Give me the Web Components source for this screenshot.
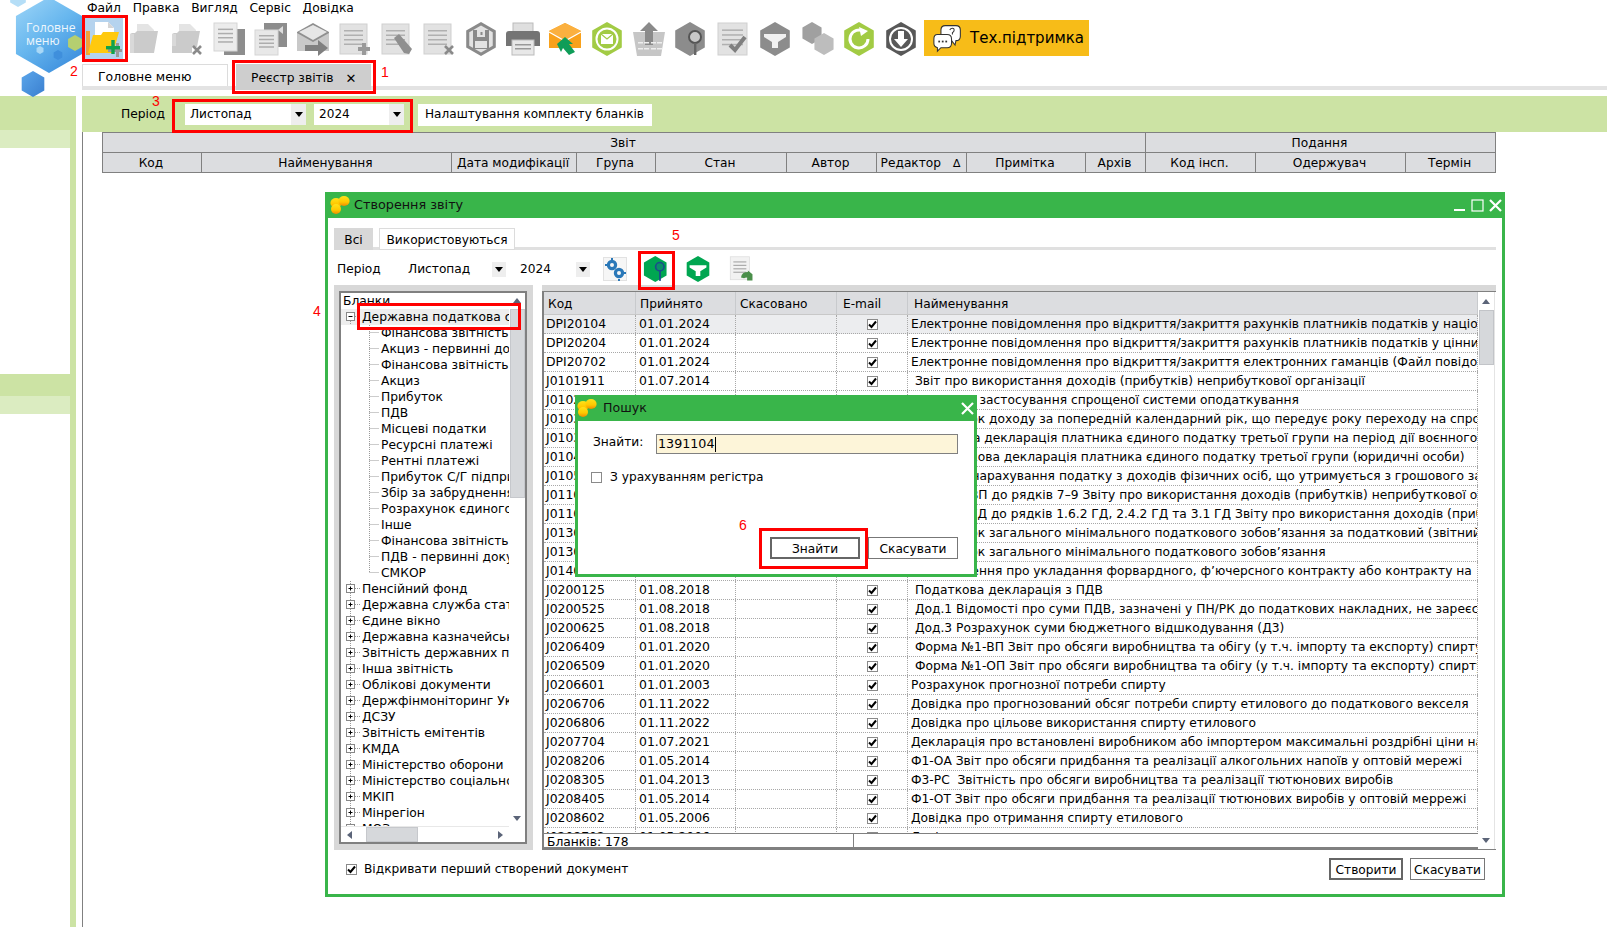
<!DOCTYPE html>
<html lang="uk"><head><meta charset="utf-8"><title>Реєстр звітів</title>
<style>
html,body{margin:0;height:100%;overflow:hidden;background:#fff}
body{font:12.2px/1.2 "DejaVu Sans",sans-serif;color:#000}
</style></head><body>
<app-shell>
  <app-logo slot="logo"></app-logo>
  <side-nav slot="side"></side-nav>
  <top-panel slot="top"></top-panel>
  <work-area slot="main"></work-area>
</app-shell>
<create-window></create-window>
<search-window></search-window>
<red-box style="--x:82px;--y:15px;--w:46px;--h:47px"></red-box>
<red-box style="--x:232px;--y:60px;--w:144px;--h:34px"></red-box>
<red-box style="--x:172px;--y:99px;--w:241px;--h:34px"></red-box>
<red-box style="--x:357px;--y:303px;--w:164px;--h:27px"></red-box>
<red-box style="--x:638px;--y:251px;--w:37px;--h:39px"></red-box>
<red-box style="--x:759px;--y:528px;--w:109px;--h:41px"></red-box>
<red-num style="--x:381px;--y:63px">1</red-num>
<red-num style="--x:70px;--y:62px">2</red-num>
<red-num style="--x:152px;--y:92px">3</red-num>
<red-num style="--x:313px;--y:302px">4</red-num>
<red-num style="--x:672px;--y:226px">5</red-num>
<red-num style="--x:739px;--y:516px">6</red-num>
<script>
const H=(cx,cy,r,f,s='')=>`<polygon points="${cx},${cy-r} ${cx+.87*r},${cy-.5*r} ${cx+.87*r},${cy+.5*r} ${cx},${cy+r} ${cx-.87*r},${cy+.5*r} ${cx-.87*r},${cy-.5*r}" fill="${f}" ${s}/>`;
const R=(x,y,w,h,f)=>`<rect x="${x}" y="${y}" width="${w}" height="${h}" fill="${f}"/>`;
const page=(x,y,w,h,f='#e2e2e2',l='#b0b0b0',s='#cfcfcf')=>`<rect x="${x}" y="${y}" width="${w}" height="${h}" fill="${f}" stroke="${s}" stroke-width="1"/>`+[.2,.35,.5,.65].map(k=>R(x+4,y+h*k,w-8,1.5,l)).join('');
const plus=(x,y,c,d=3)=>R(x-6,y-d/2,12,d,c)+R(x-d/2,y-6,d,12,c);
const cross=(x,y,c)=>`<path d="M${x-4} ${y-4}L${x+4} ${y+4}M${x+4} ${y-4}L${x-4} ${y+4}" stroke="${c}" stroke-width="2.6"/>`;
const folderGray=`<path d="M9 2h11l6 6v12H9z" fill="#e4e4e4"/><path d="M2 12l2-1h3l2-2 h21l-4 22H2z" fill="#cbcbcb"/><path d="M2 12h4v19H2z" fill="#d9d9d9"/>`;
const ICONS={
 newfolder:`<path d="M9 0h13l6 6v14H9z" fill="#fff"/><path d="M22 0l6 6h-6z" fill="#d5d5d5"/><path d="M0 9h4v24H0z" fill="#f0a33a"/><path d="M2 31L7 13h8l2-3h16l-6 21z" fill="#ffc90e"/>${R(22,27,14,3,'#999')}${R(30,21,3,14,'#999')}${R(20,24,14,3.4,'#0fa24d')}${R(25.3,18,3.4,14,'#0fa24d')}`,
 open:folderGray,
 openx:folderGray.replace('M2 12l2-1h3l2-2 h21l-4 22H2z','M2 12l2-1h3l2-2 h21l-3 16H2z')+`<path d="M2 24h20v7H2z" fill="#cbcbcb"/>`+cross(27,28,'#8a8a8a'),
 copy:R(12,7,21,26,'#8d8d8d')+page(2,1,23,28,'#ececec','#adadad','#d5d5d5'),
 copyto:R(10,1,23,24,'#8d8d8d')+page(1,8,23,25,'#e8e8e8','#adadad','#d5d5d5')+`<path d="M24 8l5-4v8z" fill="#ddd"/>`,
 mail:`<path d="M1 10L17 1l16 9v18H1z" fill="#8f8f8f"/><path d="M3 10L17 3l14 7-14 8z" fill="#e6e6e6"/><path d="M1 11l16 9 16-9v18H1z" fill="#c9c9c9"/><path d="M9 23h13v-5l10 8-10 8v-5H9z" fill="#808080"/>`,
 docadd:page(2,2,27,30)+plus(26,27,'#9a9a9a',4),
 docedit:page(2,2,27,30)+`<path d="M14 16l5-4 13 15-3 5-5-1z" fill="#8f8f8f"/>`,
 docdel:page(2,2,27,30)+cross(27,28,'#8a8a8a'),
 disk:H(17,17,17,'#8a8a8a')+H(17,17,13.5,'#e3e3e3')+`<rect x="9" y="8" width="16" height="19" fill="#8a8a8a"/><rect x="13" y="8" width="8" height="7" fill="#e3e3e3"/>${R(16.5,10,2,3,'#8a8a8a')}${R(11,19,12,7,'#e3e3e3')}`,
 print:`<rect x="7" y="1" width="20" height="10" fill="#dfdfdf" stroke="#bbb"/><path d="M0 12q0-3 3-3h28q3 0 3 3v12H0z" fill="#747474"/><rect x="6" y="18" width="22" height="15" fill="#e8e8e8" stroke="#bbb"/>${R(9,22,16,1.5,'#999')+R(9,26,16,1.5,'#999')}`,
 orange:`<path d="M1 9L17 1l16 8v17H1z" fill="#f9a11b"/><path d="M1 9l16 10L33 9l-16-8z" fill="#fbb03f"/><path d="M1 10l16 9 16-9" stroke="#fff" stroke-width="1.4" fill="none"/><path d="M9 22l8-7 8 7-4 0 6 8-6 3-6-7-2 4z" fill="#0f9d58"/>`,
 mailsync:H(17,17,17,'#a2cb44')+`<circle cx="17" cy="17" r="10.5" fill="none" stroke="#fff" stroke-width="2"/>${R(11,12,12,10,'#fff')}<path d="M11 12l6 5 6-5" stroke="#a2cb44" stroke-width="1.2" fill="none"/>`,
 upload:`<path d="M1 10h32l-4 24H5z" fill="#c6c6c6"/><path d="M17 0l9 9h-5v14h-8V9H8z" fill="#8a8a8a"/>${[20,26].map(y=>[7,13,20,26].map(x=>R(x-1,y,5,1.5,'#eee')).join('')).join('')}`,
 hexsearch:H(16,17,17,'#8c8c8c')+`<circle cx="21" cy="15" r="6" fill="#c8c8c8" stroke="#555" stroke-width="2"/>${R(20,21,2.4,12,'#666')}`,
 doccheck:page(2,1,29,32)+`<path d="M14 23l5 5 10-13" stroke="#7f7f7f" stroke-width="4" fill="none"/>`,
 hexfilter:H(17,17,17,'#8c8c8c')+`<path d="M6 12h22v3l-8 5v6h-6v-6l-8-5z" fill="#f1f1f1"/>`,
 hexes:H(12,11,11,'#a0a0a0')+H(24,22,11,'#bdbdbd'),
 refresh:H(17,17,17,'#a2cb44')+`<path d="M26 17a9 9 0 1 1-4-7.5" fill="none" stroke="#fff" stroke-width="3"/><path d="M17 5l9 4-7 5z" fill="#fff"/>`,
 download:H(17,17,17,'#585858')+`<circle cx="17" cy="17" r="11" fill="none" stroke="#fff" stroke-width="2"/><path d="M14 9h6v8h4l-7 8-7-8h4z" fill="#fff"/>`,
 gears:`<rect x=".5" y=".5" width="23" height="23" fill="#f6f6f6" stroke="#e2e2e2"/><g fill="none" stroke="#2a78b8"><circle cx="9" cy="8" r="3.6" stroke-width="3.2"/><circle cx="16" cy="16" r="3.6" stroke-width="3.2"/></g>${R(8,1,2,2,'#2a78b8')+R(2,7,2,2,'#2a78b8')+R(15,22,2,2,'#2a78b8')+R(21,15,2,2,'#2a78b8')}`,
 gsearch:H(16,17,17,'#00a651')+`<circle cx="22" cy="14" r="5.5" fill="#0b8f68" stroke="#1a4f8a" stroke-width="2.2"/>${R(21,19.5,2.4,13,'#1a4f8a')}`,
 gfilter:H(17,17,17,'#00a651')+`<path d="M6 12h22v3l-8 5v6h-6v-6l-8-5z" fill="#fff"/>`,
 docback:page(3,1,25,30,'#f2f2f2','#a8a8a8','#ddd')+`<path d="M17 28q1-7 9-7l0-2 6 5v8h-7v-4q-3 0-4 1z" fill="#4b8f4b"/>`,
 bees:`<defs><linearGradient id="bg" x1="0" y1="0" x2="0" y2="1"><stop offset="0" stop-color="#ffe21a"/><stop offset=".6" stop-color="#ffc800"/><stop offset="1" stop-color="#f08a00"/></linearGradient></defs><g fill="url(#bg)"><ellipse cx="6" cy="8" rx="5.6" ry="5"/><ellipse cx="14" cy="6" rx="5.6" ry="5"/><ellipse cx="6" cy="14" rx="5" ry="5"/></g>`,
 chat:`<path d="M14 3h12q5 0 5 5v7q0 5-5 5l-1 5-4-5h-7q-5 0-5-5V8q0-5 5-5z" fill="#fff" stroke="#333" stroke-width="1.2"/><path d="M5 13h11q5 0 5 5v5q0 5-5 5H9l-4 4v-4q-4-1-4-5v-5q0-5 4-5z" fill="#fff" stroke="#333" stroke-width="1.2"/>${R(6,20,2,2,'#333')+R(10,20,2,2,'#333')+R(14,20,2,2,'#333')}<path d="M19 8q1-2 3-2t2 2-2 3v2" stroke="#333" fill="none" stroke-width="1.2"/>`
};
const def=(n,render,extra={})=>customElements.define(n,class extends HTMLElement{
  connectedCallback(){ if(this.shadowRoot) return; this.attachShadow({mode:'open'}).innerHTML=render(this); extra.init&&extra.init(this);}
});
const esc=s=>s.replace(/ /g,'&nbsp;');

def('ui-icon',h=>{const s=h.getAttribute('size')||34,v=h.getAttribute('box')||34;return `<style>:host{display:block;width:${s}px;height:${s}px;flex:none}svg{display:block;overflow:visible}</style><svg width="${s}" height="${s}" viewBox="0 0 ${v} ${v}">${ICONS[h.getAttribute('name')]}</svg>`});

def('app-shell',()=>`<style>:host{display:grid;grid-template-columns:82px 1fr;grid-template-rows:96px 831px;height:927px;overflow:hidden}
.a{grid-column:1;grid-row:1}.b{grid-column:1;grid-row:2}.c{grid-column:2;grid-row:1}.d{grid-column:2;grid-row:2}</style>
<div class="a"><slot name="logo"></slot></div><div class="b"><slot name="side"></slot></div><div class="c"><slot name="top"></slot></div><div class="d"><slot name="main"></slot></div>`);

def('app-logo',()=>`<style>:host{display:block;position:relative;width:82px;height:96px}svg{position:absolute;left:0;top:0}
.t{position:absolute;left:26px;top:22px;color:#eef6fc;font:12.2px/12.5px "Open Sans",sans-serif}</style>
<svg width="86" height="100" viewBox="0 0 86 100"><defs><linearGradient id="g" x1="0" y1="0" x2=".7" y2="1"><stop offset="0" stop-color="#9fd6f8"/><stop offset=".55" stop-color="#66b6ee"/><stop offset="1" stop-color="#3f90de"/></linearGradient><linearGradient id="k" x1="0" y1="0" x2="1" y2="1"><stop offset="0" stop-color="#5ba6ea"/><stop offset="1" stop-color="#3a7fd0"/></linearGradient></defs>
${H(18,-2,9,'#b5def7')}${H(49,35,38,'url(#g)')}${H(40,50,4,'#a9d8f7')}${H(58,55,5,'#3f8fdc')}${H(75,43,8,'#b5cf70')}${H(33,84,13,'url(#k)')}</svg>
<span class="t">Головне<br>меню</span>`);

def('side-nav',()=>`<style>:host{display:flex;flex-direction:column;width:76px;height:831px;background:#cce3a4}
.g{height:34px;flex:none}.l{height:18px;flex:none;background:#dbecc1;margin-right:6px}.w{background:#fff;margin-right:6px;flex:none}</style>
<div class="g"></div><div class="l"></div><div class="w" style="height:226px"></div><div class="g" style="height:22px"></div><div class="l"></div><div class="w" style="flex:1"></div>`);

def('top-panel',()=>`<style>:host{display:block;height:96px}</style><main-menu></main-menu><tool-bar></tool-bar><tab-strip></tab-strip>`);
def('main-menu',()=>`<style>:host{display:flex;height:16px;gap:11.7px;padding-left:5px;align-items:center;font-size:12.3px}</style><span>Файл</span><span>Правка</span><span>Вигляд</span><span>Сервіс</span><span>Довідка</span>`);
def('tool-bar',()=>{
 const names=['newfolder','open','openx','copy','copyto','mail','docadd','docedit','docdel','disk','print','orange','mailsync','upload','hexsearch','doccheck','hexfilter','hexes','refresh','download'];
 return `<style>:host{display:flex;height:48px;box-sizing:border-box;padding-bottom:2px;align-items:center;gap:8px;padding-left:4px}
 .first{background:#b5d3ee;width:40px;height:42px;margin:0 -3px;display:flex;align-items:center;justify-content:center}
 .sup{margin-left:-2px;width:165px;height:36px;margin-top:-2px;background:#f7bc18;display:flex;align-items:center;gap:7px;padding-left:9px;box-sizing:border-box;font-size:15px}</style>
 ${names.map((n,i)=>i?`<ui-icon name="${n}"></ui-icon>`:`<div class="first"><ui-icon name="${n}"></ui-icon></div>`).join('')}
 <div class="sup"><ui-icon name="chat" size="30"></ui-icon><span>Тех.підтримка</span></div>`});
def('tab-strip',()=>`<style>:host{display:flex;box-sizing:border-box;height:26px;border-bottom:4px solid #e3e3e3;gap:8px;align-items:flex-start}
.t{box-sizing:border-box;height:22px;display:flex;align-items:center}
.a{width:146px;background:#fff;border:1px solid #dcdcdc;border-bottom:0;padding:3px 0 0 15px;font-size:12.45px}
.b{width:135px;height:26px;background:#cecece;padding:3px 0 0 15px;gap:12px;font-size:12.3px}
.x{font-size:13px;line-height:1}</style><div class="t a">Головне меню</div><div class="t b"><span>Реєстр звітів</span><span class="x">✕</span></div>`);

def('work-area',()=>`<style>:host{display:block;height:831px;box-sizing:border-box}
.rest{height:795px;border-left:1px solid #808080;padding-left:19px;box-sizing:border-box}</style><period-bar></period-bar><div class="rest"><register-head></register-head></div>`);
def('drop-down',h=>`<style>:host{display:flex;box-sizing:border-box;height:21px;background:#fff;align-items:center;padding-left:5px;justify-content:space-between;font-size:12.1px;width:var(--w)}
.a{width:15px;height:100%;background:#eeeeee;display:flex;align-items:center;justify-content:center}
.a:after{content:"";border:4.5px solid transparent;border-top:5px solid #000;border-bottom:0}</style><span>${h.getAttribute('v')}</span><span class="a"></span>`);
def('period-bar',()=>`<style>:host{display:flex;height:36px;background:#cce3a4;align-items:center;padding:1px 0 0 39px;font-size:12.1px;box-sizing:border-box}
.btn{box-sizing:border-box;width:234px;height:22px;background:#fff;margin-left:14px;display:flex;align-items:center;padding-left:7px;white-space:nowrap}</style>
<span style="width:64px;font-size:12.3px">Період</span><drop-down v="Листопад" style="--w:121px"></drop-down><drop-down v="2024" style="--w:90px;margin-left:8px"></drop-down><div class="btn">Налаштування комплекту бланків</div>`);
def('register-head',()=>{
 const c=[['Код',99],['Найменування',250],['Дата модифікації',125],['Група',79],['Стан',131],['Автор',90],['Редактор <small>∆</small>',90],['Примітка',119],['Архів',60],['Код інсп.',110],['Одержувач',150],['Термін',90]];
 return `<style>:host{display:grid;grid-template-columns:${c.map(x=>x[1]+'px').join(' ')};grid-template-rows:20px 20px;width:1394px;background:#dcdde0;border-top:1px solid #808080;border-left:1px solid #808080;box-sizing:border-box;font-size:12.2px}
 div{box-sizing:border-box;border-right:1px solid #808080;border-bottom:1px solid #808080;display:flex;align-items:center;justify-content:center;white-space:nowrap;overflow:hidden;padding:2px 2px 0 0}
 small{font-size:11px;margin-left:12px}</style>
 <div style="grid-column:span 9">Звіт</div><div style="grid-column:span 3">Подання</div>${c.map(x=>`<div>${x[0]}</div>`).join('')}`});

const TITLE=`.tb{display:flex;align-items:center;height:26px;background:#39b54a;flex:none;padding-left:5px;gap:6px;font-size:12.6px;color:#111}
.tb .sp{flex:1}.ctl{width:12px;height:12px;position:relative;flex:none;display:block}
.ctl svg{display:block}`;
const CLOSE=`<svg width="13" height="13" viewBox="0 0 13 13"><path d="M1 1l11 11M12 1L1 12" stroke="#fff" stroke-width="2.2"/></svg>`;

def('create-window',()=>`<style>:host{position:absolute;left:325px;top:192px;width:1180px;height:705px;box-sizing:border-box;border:3px solid #39b54a;border-top:0;background:#fff;display:flex;flex-direction:column}
${TITLE}
.tb{margin:0 -3px;font-size:12.8px}
.body{flex:1;display:flex;flex-direction:column;padding:10px 6px 0 6px;min-height:0}
.cols{display:grid;grid-template-columns:199px 954px;gap:9px;height:565px;flex:none}
.foot{flex:1;display:flex;align-items:flex-start;position:relative}
.chk{display:flex;align-items:center;gap:7px;margin:12px 0 0 12px;white-space:nowrap}
.btns{margin:8px 11px 0 auto;display:flex;gap:7px}
</style>
<div class="tb"><ui-icon name="bees" size="20" box="20"></ui-icon><span style="margin-left:-2px">Створення звіту</span><span class="sp"></span>
<span class="ctl" style="margin-right:-1px"><svg width="12" height="12"><rect y="10" width="11" height="2" fill="#fff"/></svg></span>
<span class="ctl"><svg width="13" height="13"><rect x="1" y="1" width="11" height="11" fill="none" stroke="#fff" stroke-width="1.2"/></svg></span>
<span class="ctl" style="margin-right:4px">${CLOSE}</span></div>
<div class="body"><form-tabs></form-tabs><form-period></form-period>
<div class="cols"><forms-tree></forms-tree><forms-table></forms-table></div>
<div class="foot"><label class="chk"><ui-check on></ui-check><span>Відкривати перший створений документ</span></label>
<div class="btns"><ui-btn w="74" def>Створити</ui-btn><ui-btn w="75">Скасувати</ui-btn></div></div></div>`);

def('ui-check',h=>`<style>:host{display:block;width:11px;height:11px;box-sizing:border-box;border:1px solid #8a8a8a;background:#fff;flex:none}svg{display:block}</style>${h.hasAttribute('on')?'<svg width="9" height="9" viewBox="0 0 9 9"><path d="M1 4.5l2.5 2.5L8 1.5" stroke="#000" stroke-width="2" fill="none"/></svg>':''}`);
def('ui-btn',h=>`<style>:host{display:flex;box-sizing:border-box;width:${h.getAttribute('w')}px;height:22px;padding-top:2px;border:${h.hasAttribute('def')?'2.5px solid #666':'1px solid #777'};align-items:center;justify-content:center;background:#fff;white-space:nowrap}</style><slot></slot>`);

def('form-tabs',()=>`<style>:host{display:flex;height:22px;gap:6px;box-sizing:border-box;background:linear-gradient(#fff 19px,#e0e0e0 19px);flex:none}
div{box-sizing:border-box;height:22px;padding-top:2px;display:flex;align-items:center;justify-content:center}
.a{width:39px;background:#d8d8d8}.b{width:136px;background:#fff;border:1px solid #dcdcdc}</style><div class="a">Всі</div><div class="b">Використовуються</div>`);
def('form-period',()=>`<style>:host{display:flex;height:35px;box-sizing:border-box;padding:3px 0 0 3px;align-items:center;flex:none;position:relative}
.a{width:14px;height:15px;background:#eeeeee;display:flex;align-items:center;justify-content:center;flex:none}
.a:after{content:"";border:4px solid transparent;border-top:5px solid #000;border-bottom:0}
span{flex:none}
</style><span style="width:71px">Період</span><span style="width:84px">Листопад</span><span class="a"></span><span style="width:56px;margin-left:14px">2024</span><span class="a"></span>
<ui-icon name="gears" size="24" box="24" style="margin-left:13px"></ui-icon><ui-icon name="gsearch" size="26" style="margin-left:16px"></ui-icon><ui-icon name="gfilter" size="26" style="margin-left:16px"></ui-icon><ui-icon name="docback" size="26" style="margin-left:17px"></ui-icon>`);

def('forms-tree',()=>{
 const l2=['Фінансова звітність','Акциз - первинні документи','Фінансова звітність','Акциз','Прибуток','ПДВ','Місцеві податки','Ресурсні платежі','Рентні платежі','Прибуток С/Г підприємств','Збір за забруднення','Розрахунок єдиного внеску','Інше','Фінансова звітність','ПДВ - первинні документи','СМКОР'];
 const l1=['Пенсійний фонд','Державна служба статистики','Єдине вікно','Державна казначейська служба','Звітність державних підприємств','Інша звітність','Облікові документи','Держфінмоніторинг України','ДСЗУ','Звітність емітентів','КМДА','Міністерство оборони','Міністерство соціальної політики','МКІП','Мінрегіон','МОЗ'];
 const box=(m)=>`<rect x="5.5" y="3.5" width="8" height="8" fill="#fff" stroke="#888"/><path d="M7.5 7.5h4${m?'':'M9.5 5.5v4'}" stroke="#000"/>`;
 const dot='stroke="#999" stroke-dasharray="1 1"';
 const row1=(t,m,first)=>`<div class="r ${first?'sel':''}"><svg width="21" height="16"><path d="M9.5 ${first?12:0}V16M14 7.5h5" ${dot} fill="none"/>${box(m)}</svg><span>${t}</span></div>`;
 const row2=(t,last)=>`<div class="r"><svg width="40" height="16"><path d="M28.5 0V${last?8:16}M28.5 7.5h9" ${dot} fill="none"/></svg><span>${t}</span></div>`;
 return `<style>:host{display:block;background:#d8d8d8;padding:6px 6px 6px 5px;box-sizing:border-box;height:565px}
 .f{box-sizing:border-box;height:553px;border:2px solid #808080;background:#fff;display:grid;grid-template-columns:168px 16px;grid-template-rows:1fr 16px}
 .v{overflow:hidden;font-size:12.3px;grid-column:1;grid-row:1;min-height:0;position:relative}
 .h{height:16px;line-height:16px;padding-left:2px}
 .r{height:16px;display:flex;align-items:center;white-space:nowrap}
 .r svg{flex:none;display:block}.sel{background:#eeeeee}
 .vs{grid-column:2;grid-row:1;background:#fff;display:flex;flex-direction:column;align-items:center}
 .up{margin-top:5px;border:4.5px solid transparent;border-bottom:5px solid #5b6478;border-top:0}
 .th{width:15px;height:189px;background:#d6d8db;margin-top:6px;box-sizing:border-box;border:1px solid #c6c8cc}
 .dn{margin-top:auto;margin-bottom:5px;border:4.5px solid transparent;border-top:5px solid #5b6478;border-bottom:0}
 .hs{grid-column:1;grid-row:2;display:flex;align-items:center;border-top:1px solid #e8e8e8;position:relative;background:#fff}
 .l{margin-left:6px;border:4.5px solid transparent;border-right:5px solid #5b6478;border-left:0}
 .tx{width:52px;height:15px;background:#d6d8db;border:1px solid #c6c8cc;box-sizing:border-box;margin-left:14px}
 .rr{margin-left:auto;margin-right:6px;border:4.5px solid transparent;border-left:5px solid #5b6478;border-right:0}
 </style><div class="f"><div class="v"><div class="h">Бланки</div>${row1('Державна податкова служба',true,true)}${l2.map((t,i)=>row2(t,i==15)).join('')}${l1.map(t=>row1(t,false)).join('')}</div>
 <div class="vs"><i class="up"></i><i class="th"></i><i class="dn"></i></div><div class="hs"><i class="l"></i><i class="tx"></i><i class="rr"></i></div></div>`});

def('forms-table',()=>{
 const S='Електронне повідомлення про відкриття/закриття ';
 const rows=[['DPI20104','01.01.2024',S+'рахунків платників податків у національному банку'],['DPI20204','01.01.2024',S+'рахунків платників податків у цінних паперах'],['DPI20702','01.01.2024',S+'електронних гаманців (Файл повідомлення)'],
 ['J0101911','01.07.2014',' Звіт про використання доходів (прибутків) неприбуткової організації'],['J0102005','01.01.2021','Заява про застосування спрощеної системи оподаткування'],['J0103005','01.01.2021','Розрахунок доходу за попередній календарний рік, що передує року переходу на спрощену систему'],
 ['J0103506','01.04.2022','Податкова декларація платника єдиного податку третьої групи на період дії воєнного стану'],['J0104006','01.01.2022','     Податкова декларація платника єдиного податку третьої групи (юридичні особи)'],['J0105004','01.01.2021',' Звіт про нарахування податку з доходів фізичних осіб, що утримується з грошового забезпечення'],
 ['J0110107','01.01.2021','Додаток ВП до рядків 7–9 Звіту про використання доходів (прибутків) неприбуткової організації'],['J0110207','01.01.2021','Додаток ГД до рядків 1.6.2 ГД, 2.4.2 ГД та 3.1 ГД Звіту про використання доходів (прибутків)'],['J0130101','01.01.2022','Розрахунок загального мінімального податкового зобов\u2019язання за податковий (звітний) рік'],['J0130201','01.01.2022','Розрахунок загального мінімального податкового зобов\u2019язання'],['J0140105','01.01.2020','Повідомлення про укладання форвардного, ф\u2019ючерсного контракту або контракту на'],
 ['J0200125','01.08.2018',' Податкова декларація з ПДВ'],['J0200525','01.08.2018',' Дод.1 Відомості про суми ПДВ, зазначені у ПН/РК до податкових накладних, не зареєстрованих'],['J0200625','01.08.2018',' Дод.3 Розрахунок суми бюджетного відшкодування (Д3)'],
 ['J0206409','01.01.2020',' Форма №1-ВП Звіт про обсяги виробництва та обігу (у т.ч. імпорту та експорту) спирту етилового'],['J0206509','01.01.2020',' Форма №1-ОП Звіт про обсяги виробництва та обігу (у т.ч. імпорту та експорту) спирту (у т.ч. біоетанолу)'],['J0206601','01.01.2003','Розрахунок прогнозної потреби спирту'],['J0206706','01.11.2022','Довідка про прогнозований обсяг потреби спирту етилового до податкового векселя'],['J0206806','01.11.2022','Довідка про цільове використання спирту етилового'],['J0207704','01.07.2021','Декларація про встановлені виробником або імпортером максимальні роздрібні ціни на'],['J0208206','01.05.2014','Ф1-ОА Звіт про обсяги придбання та реалізації алкогольних напоїв у оптовій мережі'],['J0208305','01.04.2013','Ф3-РС  Звітність про обсяги виробництва та реалізації тютюнових виробів'],['J0208405','01.05.2014','Ф1-ОТ Звіт про обсяги придбання та реалізації тютюнових виробів у оптовій меррежі'],['J0208602','01.05.2006','Довідка про отримання спирту етилового'],['J0208702','01.05.2006','Довідка про отримання спирту етилового']];
 const G='grid-template-columns:92px 100px 101px 71px 570px';
 return `<style>:host{display:block;background:linear-gradient(#d8d8d8 6px,transparent 6px);padding-top:6px;box-sizing:border-box;height:565px;position:relative}
 .wrap{display:grid;grid-template-columns:936px 18px;height:559px;border-top:1px solid #808080;box-sizing:border-box;border-bottom:1px solid #808080}
 .t{border-left:2px solid #808080;display:flex;flex-direction:column;min-height:0}
 .hd,.row{display:grid;${G}}
 .hd{height:23px;background:#dcdde0;flex:none;border-bottom:1px solid #c8c8c8;box-sizing:border-box;font-size:12.2px}
 .hd div{display:flex;align-items:center;padding:2px 0 0 4px;border-right:1px solid #c8cacd}
 .hd .p{padding-left:6px}
 .rows{flex:1;overflow:hidden;min-height:0}
 .row{height:19px;box-sizing:border-box;border-bottom:1px dotted #a8a8a8;font-size:12.4px}
 .row:first-child{background:#ecedef}
 .row div{overflow:hidden;white-space:nowrap;border-right:1px dotted #a8a8a8;line-height:18px;box-sizing:border-box}
 .cd{padding-left:2px}.dt{padding-left:3px}.nm{padding-left:3px;font-size:12.25px}
 .ce{display:flex;align-items:center;justify-content:center;padding:1px 0 0 1px}
 .st{height:16px;flex:none;border-top:1px solid #808080;border-bottom:2px solid #808080;box-sizing:border-box;display:flex;align-items:center;background:#fff;font-size:12.3px}
 .st span:first-child{width:310px;border-right:1px solid #808080;padding-left:3px;height:100%;line-height:17px;box-sizing:border-box}
 .vs{display:flex;flex-direction:column;align-items:center;border-right:1px solid #e4e4e4;box-sizing:border-box;width:17px}
 .up{margin-top:7px;border:4.5px solid transparent;border-bottom:5px solid #5b6478;border-top:0}
 .th{width:15px;height:55px;background:#d6d8db;border:1px solid #c2c4c8;box-sizing:border-box;margin-top:6px}
 .dn{margin-top:auto;margin-bottom:6px;border:4.5px solid transparent;border-top:5px solid #5b6478;border-bottom:0}
 </style><div class="wrap"><div class="t"><div class="hd"><div>Код</div><div>Прийнято</div><div>Скасовано</div><div class="p">E-mail</div><div class="p">Найменування</div></div>
 <div class="rows">${rows.map(r=>`<div class="row"><div class="cd">${r[0]}</div><div class="dt">${r[1]}</div><div></div><div class="ce"><ui-check on></ui-check></div><div class="nm">${esc(r[2])}</div></div>`).join('')}</div>
 <div class="st"><span>Бланків: 178</span><span></span></div></div>
 <div class="vs"><i class="up"></i><i class="th"></i><i class="dn"></i></div></div>`});

def('search-window',()=>`<style>:host{position:absolute;left:575px;top:395px;width:402px;height:182px;box-sizing:border-box;border:3px solid #39b54a;border-top:0;background:#fff;display:flex;flex-direction:column}
${TITLE}
.tb{margin:0 -3px;padding-left:2px}
.body{flex:1;display:flex;flex-direction:column;padding:13px 16px 15px 15px}
.f{display:flex;align-items:flex-start}
.in{margin-left:auto;box-sizing:border-box;width:302px;height:20px;background:#fdf5d9;border:1px solid #808080;display:flex;align-items:center;padding-left:1px;font-size:12.7px}
.in i{display:block;width:1px;height:15px;background:#000}
.c{display:flex;align-items:center;gap:8px;margin:16px 0 0 -2px}
.b{margin-top:auto;display:flex;justify-content:flex-end;gap:8px}
</style><div class="tb"><ui-icon name="bees" size="20" box="20"></ui-icon><span>Пошук</span><span class="sp"></span><span class="ctl" style="margin-right:4px">${CLOSE}</span></div>
<div class="body"><div class="f"><span style="margin-top:1px">Знайти:</span><div class="in"><span>1391104</span><i></i></div></div>
<div class="c"><ui-check></ui-check><span>З урахуванням регістра</span></div>
<div class="b"><ui-btn w="90" def>Знайти</ui-btn><ui-btn w="90">Скасувати</ui-btn></div></div>`);

def('red-box',()=>`<style>:host{position:absolute;left:var(--x);top:var(--y);width:var(--w);height:var(--h);box-sizing:border-box;border:3px solid #f00;pointer-events:none}</style>`);
def('red-num',()=>`<style>:host{position:absolute;left:var(--x);top:var(--y);color:#f00;font:14px/18px "Liberation Sans",sans-serif}</style><slot></slot>`);
</script>
</body></html>
